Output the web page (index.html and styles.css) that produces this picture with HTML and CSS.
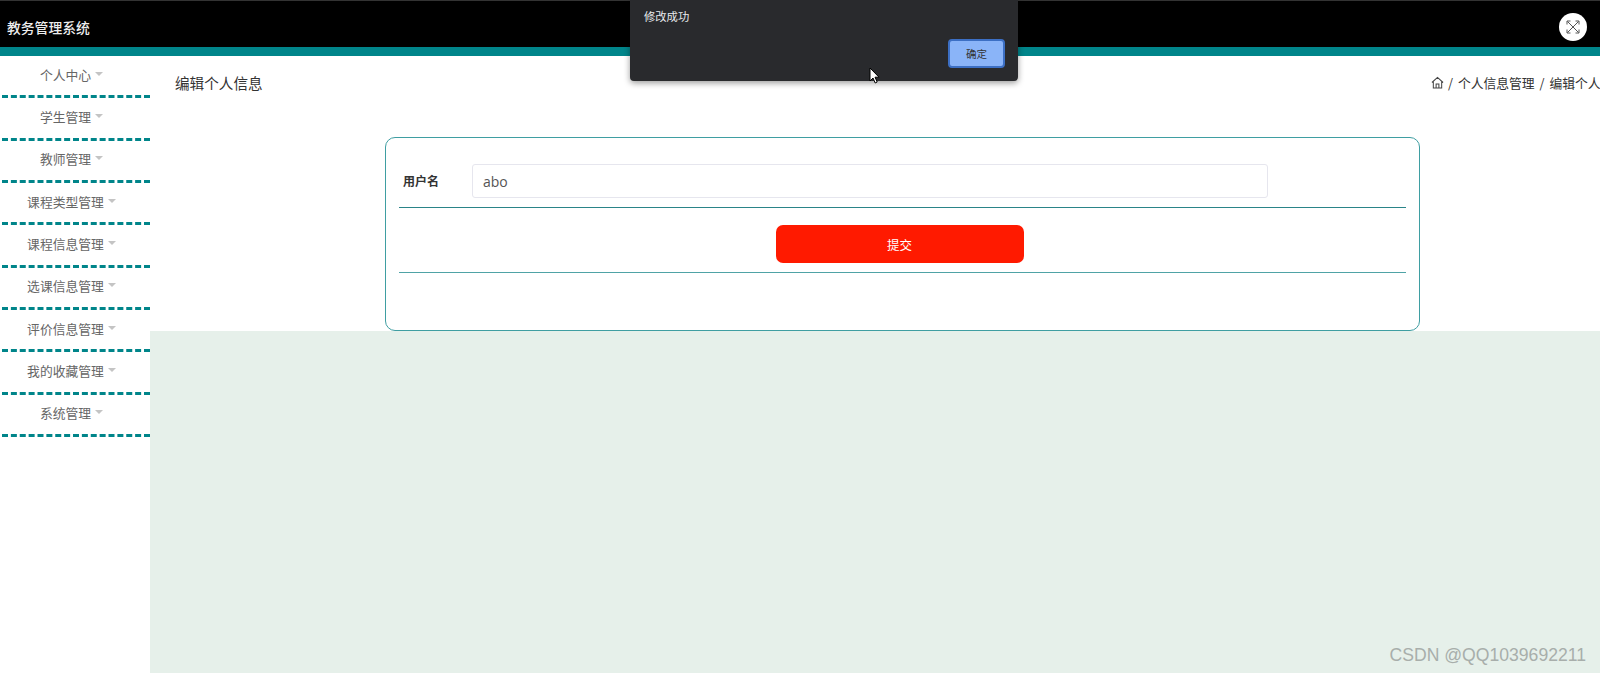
FILE: index.html
```html
<!DOCTYPE html>
<html lang="zh">
<head>
<meta charset="utf-8">
<title>教务管理系统</title>
<link rel="stylesheet" href="styles.css">
</head>
<body>
<header class="topbar">
  <div class="brand">教务管理系统</div>
  <button class="fullscreen" aria-label="全屏">
    <svg width="16" height="16" viewBox="0 0 16 16" fill="none" stroke="#555" stroke-width="1">
      <path d="M2.5 2.5l11 11M13.5 2.5l-11 11"/>
      <path d="M2 5.5V2h3.5M10.5 2H14v3.5M14 10.5V14h-3.5M5.5 14H2v-3.5"/>
    </svg>
  </button>
</header>
<div class="layout">
  <nav class="sidebar">
    <a class="nav-item">个人中心<i class="caret"></i></a>
    <a class="nav-item">学生管理<i class="caret"></i></a>
    <a class="nav-item">教师管理<i class="caret"></i></a>
    <a class="nav-item">课程类型管理<i class="caret"></i></a>
    <a class="nav-item">课程信息管理<i class="caret"></i></a>
    <a class="nav-item">选课信息管理<i class="caret"></i></a>
    <a class="nav-item">评价信息管理<i class="caret"></i></a>
    <a class="nav-item">我的收藏管理<i class="caret"></i></a>
    <a class="nav-item">系统管理<i class="caret"></i></a>
  </nav>
  <main class="main">
    <section class="panel">
      <div class="page-head">
        <h1 class="page-title">编辑个人信息</h1>
        <div class="crumbs">
          <svg class="home" width="13" height="13" viewBox="0 0 14 14" fill="none" stroke="#444" stroke-width="1.1">
            <path d="M1 7l6-5.5L13 7M2.5 6v7h9V6M5.5 13V8.5h3V13"/>
          </svg>
          <span>/ 个人信息管理 / 编辑个人信息</span>
        </div>
      </div>
      <form class="card">
        <div class="field">
          <label class="field-label">用户名</label>
          <input class="field-input" type="text" value="abo">
        </div>
        <div class="actions">
          <button class="submit" type="button">提交</button>
        </div>
      </form>
    </section>
  </main>
</div>
<div class="dialog">
  <p class="dialog-text">修改成功</p>
  <div class="dialog-actions"><button class="dialog-ok">确定</button></div>
</div>
<svg class="cursor" width="12" height="17" viewBox="0 0 12 17">
  <path d="M1 1v13l3-3 2.2 5 2-1-2.2-4.8H10z" fill="#fff" stroke="#000" stroke-width="1"/>
</svg>
<div class="watermark">CSDN @QQ1039692211</div>
</body>
</html>
```
FILE: styles.css
```css
* { box-sizing: border-box; }
html, body { height: 100%; }
body {
  margin: 0;
  height: 673px;
  overflow: hidden;
  display: flex;
  flex-direction: column;
  font-family: "Noto Sans CJK SC", "Noto Sans", sans-serif;
  background: #fff;
  color: #333;
}
.topbar {
  flex: 0 0 56px;
  display: flex;
  align-items: center;
  justify-content: space-between;
  background: #000;
  border-top: 1px solid #333;
  border-bottom: 9px solid #00858a;
  padding: 6px 13px 0 7px;
}
.brand { color: #eee; font-size: 13.8px; font-weight: 500; }
.fullscreen {
  width: 28px;
  height: 28px;
  padding: 0;
  border: 0;
  border-radius: 50%;
  background: #fff;
  display: flex;
  align-items: center;
  justify-content: center;
}
.layout { flex: 1; display: flex; min-height: 0; }
.sidebar { flex: 0 0 150px; background: #fff; }
.nav-item {
  display: flex;
  align-items: center;
  justify-content: center;
  height: 42.33px;
  padding: 0 9px 3px 0;
  border-bottom: 3px dashed #00858a;
  margin-left: 2px;
  font-size: 12.8px;
  color: #666;
}
.caret {
  width: 0;
  height: 0;
  margin: -1px 0 0 4px;
  border-left: 4px solid transparent;
  border-right: 4px solid transparent;
  border-top: 4px solid #c4c4c4;
}
.main {
  flex: 1;
  min-width: 0;
  background: #e6f0ea;
}
.panel {
  height: 275px;
  background: #fff;
  overflow: hidden;
}
.page-head {
  display: flex;
  align-items: center;
  height: 52px;
  padding-left: 25px;
}
.page-title {
  flex: 1;
  margin: 0;
  font-size: 14.6px;
  font-weight: 400;
  color: #333;
}
.crumbs {
  flex: 0 0 169px;
  display: flex;
  align-items: center;
  gap: 4px;
  overflow: hidden;
  white-space: nowrap;
  word-spacing: 2px;
  font-size: 12.8px;
  color: #333;
}
.home { flex: none; }
.card {
  width: 1035px;
  height: 194px;
  margin: 29px 0 0 235px;
  padding: 26px 13px 0;
  border: 1px solid #3f9ea2;
  border-radius: 10px;
}
.field {
  display: flex;
  align-items: center;
  height: 44px;
  padding: 0 0 9px 4px;
  border-bottom: 1px solid #2a8488;
}
.field-label {
  flex: 0 0 69px;
  padding-bottom: 2px;
  font-size: 12px;
  font-weight: 700;
  color: #333;
}
.field-input {
  width: 796px;
  height: 34px;
  padding: 0 10px;
  border: 1px solid #e6e6ee;
  border-radius: 3px;
  font-family: "Open Sans", sans-serif;
  font-size: 14px;
  color: #555;
  outline: none;
}
.actions {
  display: flex;
  justify-content: center;
  height: 65px;
  padding: 17px 6px 0 0;
  border-bottom: 1px solid #4fa3a6;
}
.submit {
  width: 248px;
  height: 38px;
  border: 0;
  border-radius: 7px;
  background: #ff1a00;
  color: #fff;
  font-family: inherit;
  font-size: 12.5px;
}
.dialog {
  position: absolute;
  left: 630px;
  top: 0;
  width: 388px;
  height: 81px;
  padding: 8px 14px;
  background: #292a2d;
  border-radius: 0 0 4px 4px;
  box-shadow: 0 2px 6px rgba(0, 0, 0, .4);
}
.dialog-text {
  margin: 0;
  font-size: 11.3px;
  line-height: 17px;
  color: #e8eaed;
}
.dialog-actions {
  display: flex;
  justify-content: flex-end;
  margin: 14px -1px 0 0;
}
.dialog-ok {
  width: 57px;
  height: 29px;
  padding: 0;
  border: 2px solid #3c6fc4;
  border-radius: 4px;
  background: #8ab4f8;
  color: #333;
  font-family: inherit;
  font-size: 10.5px;
}
.cursor {
  position: absolute;
  left: 869px;
  top: 67px;
}
.watermark {
  position: absolute;
  right: 14px;
  bottom: 7px;
  font-family: "Liberation Sans", sans-serif;
  font-size: 17.6px;
  line-height: 22px;
  color: #a8aeab;
}
```
